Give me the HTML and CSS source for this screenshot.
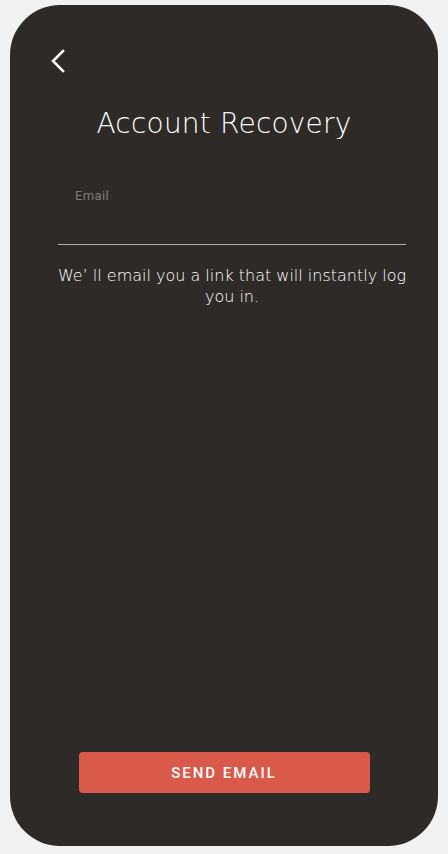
FILE: index.html
```html
<!DOCTYPE html>
<html>
<head>
<meta charset="utf-8">
<link rel="stylesheet" href="styles.css">
</head>
<body>
<div class="phone">
  <div class="top">
    <button class="back" aria-label="Back">
      <svg width="16" height="24" viewBox="0 0 16 24"><path d="M13 2 L3 12 L13 22" fill="none" stroke="#fff" stroke-width="2.6" stroke-linecap="square"/></svg>
    </button>
  </div>
  <h1 class="title">Account Recovery</h1>
  <div class="field">
    <span class="label">Email</span>
  </div>
  <p class="hint">We’ ll email you a link that will instantly log you in.</p>
  <div class="spacer"></div>
  <button class="send">SEND EMAIL</button>
</div>
</body>
</html>
```
FILE: styles.css
```css
html, body {
  margin: 0;
  padding: 0;
  background: #f2f2f2;
}
body {
  padding: 5px 10px 8px 10px;
  font-family: "DejaVu Sans", sans-serif;
}
.phone {
  width: 428px;
  height: 841px;
  box-sizing: border-box;
  background: #2e2a27;
  border-radius: 50px;
  display: flex;
  flex-direction: column;
  align-items: center;
  padding: 44px 0 53px 0;
}
.top {
  align-self: stretch;
  padding-left: 40px;
  height: 26px;
}
.back {
  background: none;
  border: 0;
  padding: 0;
  margin: 0;
  display: block;
}
.title {
  margin: 31px 0 0 0;
  font-family: "DejaVu Sans", sans-serif;
  font-weight: 200;
  font-size: 28px;
  color: #fff;
  letter-spacing: 0.2px;
  line-height: 36px;
}
.field {
  margin: 30px 0 0 16px;
  width: 348px;
  height: 73px;
  box-sizing: border-box;
  border-bottom: 1px solid #b3afab;
  padding: 13px 17px;
}
.label {
  font-family: Roboto, sans-serif;
  font-size: 13px;
  color: #7d7a77;
  letter-spacing: 0.4px;
}
.hint {
  margin: 20px 0 0 16px;
  width: 356px;
  text-align: center;
  font-family: "DejaVu Sans", sans-serif;
  font-weight: 200;
  font-size: 16px;
  line-height: 21px;
  color: #fff;
}
.spacer { flex: 1; }
.send {
  width: 291px;
  height: 41px;
  border: 0;
  border-radius: 4px;
  background: #d95a4a;
  color: #fff;
  font-family: Roboto, sans-serif;
  font-weight: 500;
  font-size: 15px;
  letter-spacing: 2px;
}
```
